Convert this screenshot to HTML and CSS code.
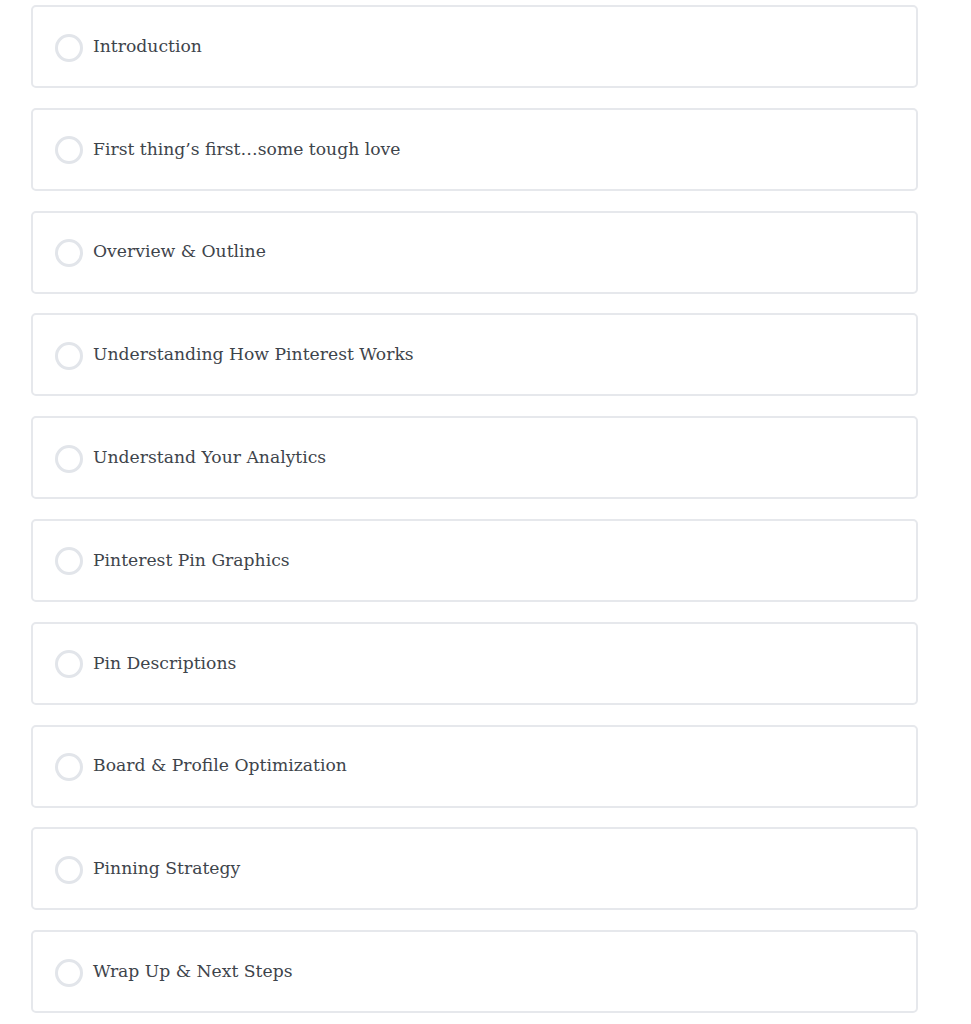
FILE: index.html
```html
<!DOCTYPE html>
<html lang="en">
<head>
<meta charset="utf-8">
<title>Lessons</title>
<link rel="stylesheet" href="styles.css">
</head>
<body>
<ul class="lessons">
  <li class="lesson"><span class="check"></span><span class="title">Introduction</span></li>
  <li class="lesson"><span class="check"></span><span class="title">First thing’s first…some tough love</span></li>
  <li class="lesson"><span class="check"></span><span class="title">Overview &amp; Outline</span></li>
  <li class="lesson"><span class="check"></span><span class="title">Understanding How Pinterest Works</span></li>
  <li class="lesson"><span class="check"></span><span class="title">Understand Your Analytics</span></li>
  <li class="lesson"><span class="check"></span><span class="title">Pinterest Pin Graphics</span></li>
  <li class="lesson"><span class="check"></span><span class="title">Pin Descriptions</span></li>
  <li class="lesson"><span class="check"></span><span class="title">Board &amp; Profile Optimization</span></li>
  <li class="lesson"><span class="check"></span><span class="title">Pinning Strategy</span></li>
  <li class="lesson"><span class="check"></span><span class="title">Wrap Up &amp; Next Steps</span></li>
</ul>
</body>
</html>
```
FILE: styles.css
```css
html, body {
  margin: 0;
  padding: 0;
  background: #ffffff;
}
body {
  font-family: "DejaVu Serif", "Liberation Serif", serif;
  color: #3e444b;
}
.lessons {
  list-style: none;
  margin: 0;
  padding: 5px 0 0 31px;
  width: 887px;
  display: flex;
  flex-direction: column;
  gap: 19.8px;
}
.lesson {
  box-sizing: border-box;
  height: 83px;
  border: 2px solid #e6e8ec;
  border-radius: 5px;
  display: flex;
  align-items: center;
  padding: 0 0 0 22px;
  gap: 10px;
}
.check {
  box-sizing: border-box;
  flex: none;
  width: 28px;
  height: 28px;
  border-radius: 50%;
  border: 3px solid #e2e5ea;
  margin-top: 2px;
}
.title {
  font-size: 17.2px;
  line-height: 1;
}
```
